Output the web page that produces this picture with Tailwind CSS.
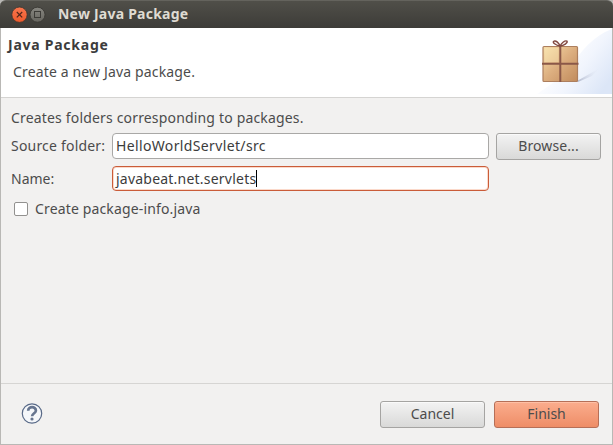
<!DOCTYPE html>
<html lang="en">
<head>
<meta charset="utf-8">
<title>New Java Package</title>
<script src="https://cdn.jsdelivr.net/npm/@tailwindcss/browser@4"></script>
</head>
<body class="w-[613px] h-[445px] overflow-hidden bg-[#b9b8b5] font-['Noto_Sans',sans-serif] text-[14px] leading-[20px] text-[#4c4c4c] whitespace-nowrap">
<div class="flex flex-col w-full h-full">
  <header class="h-[28px] shrink-0 flex items-center rounded-t-[6px] border-t border-[#64635d] bg-linear-to-b from-[#504f49] to-[#3d3c38] pl-[11px]">
    <svg class="w-[36px] h-[18px] shrink-0" viewBox="0 0 36 18">
      <defs>
        <linearGradient id="red" x2="0" y2="1"><stop stop-color="#f8764e"/><stop offset="1" stop-color="#ee5a2c"/></linearGradient>
        <linearGradient id="gray" x2="0" y2="1"><stop stop-color="#878680"/><stop offset="1" stop-color="#66655f"/></linearGradient>
      </defs>
      <circle cx="8.5" cy="8.7" r="7.7" fill="url(#red)" stroke="#35342f" stroke-width=".8"/>
      <path d="M5.8 6l5.4 5.4M11.2 6l-5.4 5.4" stroke="#51261a" stroke-width="1.2"/>
      <circle cx="26.5" cy="8.7" r="7.5" fill="url(#gray)" stroke="#35342f" stroke-width=".8"/>
      <rect x="23.5" y="5.5" width="6" height="6" fill="none" stroke="#3c3b37"/>
    </svg>
    <h1 class="ml-[11px] -mt-[2px] font-bold text-[#dfdbd2] tracking-[0.23px]">New Java Package</h1>
  </header>
  <main class="flex-1 min-h-0 ml-px mr-px mb-px flex flex-col bg-[#f2f1f0]">
    <section class="h-[70px] shrink-0 flex justify-between bg-white border-b border-[#d5d4d2]">
      <div class="pl-[7px] pt-[7px]">
        <h2 class="font-bold text-[#3c3c3c] tracking-[0.75px]">Java Package</h2>
        <p class="pl-[5px] mt-[7px] tracking-[0.15px]">Create a new Java package.</p>
      </div>
      <svg class="w-[75px] h-[66px] shrink-0" viewBox="0 0 75 66">
        <defs>
          <linearGradient id="sky" x1=".3" y1=".3" x2="1" y2=".75"><stop stop-color="#fff"/><stop offset=".5" stop-color="#f1f5fd"/><stop offset="1" stop-color="#dce6f7"/></linearGradient>
          <linearGradient id="box" x2="1" y2="1"><stop stop-color="#f6dca8"/><stop offset=".5" stop-color="#dcae7f"/><stop offset="1" stop-color="#c18b5c"/></linearGradient>
          <linearGradient id="shade" x2="1"><stop stop-color="#aeb5ca"/><stop offset="1" stop-color="#e6ecf8" stop-opacity="0"/></linearGradient>
        </defs>
        <path d="M0 66L30 45Q50 10 75 1v65z" fill="url(#sky)"/>
        <path d="M40 53L63 40L55 48L41 54z" fill="url(#shade)"/>
        <rect x="6" y="18.5" width="34.5" height="35" rx="1" fill="url(#box)" stroke="#ad7f5e" stroke-width="1.2"/>
        <path d="M7.5 20h14v14h-14z" fill="#fff1be" opacity=".35"/>
        <path d="M23.3 18v36M5 35.7h36.5" stroke="#8b5848" stroke-width="2"/>
        <path d="M23 18C19 17.5 14.5 14.2 17 13.2C19 12.3 22 15 23 18C24.5 15 28 12 30 13.2C31 15 27 17.5 23 18z" fill="#faf2f0" stroke="#80483f" stroke-width="1.4"/>
      </svg>
    </section>
    <section class="flex-1 min-h-0 pl-[10px] pr-[11px] pt-[10px]">
      <p class="tracking-[0.17px]">Creates folders corresponding to packages.</p>
      <div class="mt-[4px] flex items-center h-[28px]">
        <label class="w-[101px] tracking-[0.2px]">Source folder:</label>
        <div class="w-[377px] h-[26px] flex items-center pl-[3px] rounded-[4px] border border-[#a9a8a6] bg-white text-[#3c3c3c] tracking-[0.36px]">HelloWorldServlet/src</div>
        <button class="ml-[7px] w-[105px] h-[27px] rounded-[3px] border border-[#a5a4a2] bg-linear-to-b from-[#f3f3f3] to-[#d9d9d8] shadow-[inset_0_1px_0_#fafafa] tracking-[0.1px]">Browse...</button>
      </div>
      <div class="mt-[6px] flex items-center h-[25px]">
        <label class="w-[101px]">Name:</label>
        <div class="w-[377px] h-[25px] flex items-center pl-[3px] rounded-[4px] border border-[#ca5c39] shadow-[inset_0_0_0_1px_#fbd9ca] bg-white text-[#3c3c3c] tracking-[0.22px]">javabeat.net.servlets<i class="w-px h-[17px] bg-black"></i></div>
      </div>
      <label class="mt-[8px] ml-[3px] flex items-center h-[20px]">
        <span class="w-[14px] h-[14px] rounded-[2px] border border-[#92918f] bg-white"></span>
        <span class="ml-[7px] tracking-[0.15px]">Create package-info.java</span>
      </label>
    </section>
    <footer class="h-[61px] shrink-0 flex items-center border-t border-[#d6d5d3] pl-[20px] pr-[13px]">
      <svg class="w-[22px] h-[22px]" viewBox="0 0 22 22">
        <circle cx="11" cy="10.5" r="9.7" fill="#f5f7fa" stroke="#586987" stroke-width="1.2"/>
        <path d="M7.2 7.7C7.2 2.9 15 3.1 14.9 7.7C14.8 10.2 11.2 10.3 11.1 13.2" fill="none" stroke="#66758f" stroke-width="2.7"/>
        <circle cx="11" cy="16" r="1.6" fill="#66758f"/>
      </svg>
      <button class="ml-auto w-[105px] h-[27px] rounded-[3px] border border-[#a5a4a2] bg-linear-to-b from-[#f3f3f3] to-[#d9d9d8] shadow-[inset_0_1px_0_#fafafa]">Cancel</button>
      <button class="ml-[9px] w-[105px] h-[27px] rounded-[3px] border border-[#b66f57] bg-linear-to-b from-[#fbad8d] to-[#ee8d67] shadow-[inset_0_1px_0_#ffc0a5]">Finish</button>
    </footer>
  </main>
</div>
</body>
</html>
